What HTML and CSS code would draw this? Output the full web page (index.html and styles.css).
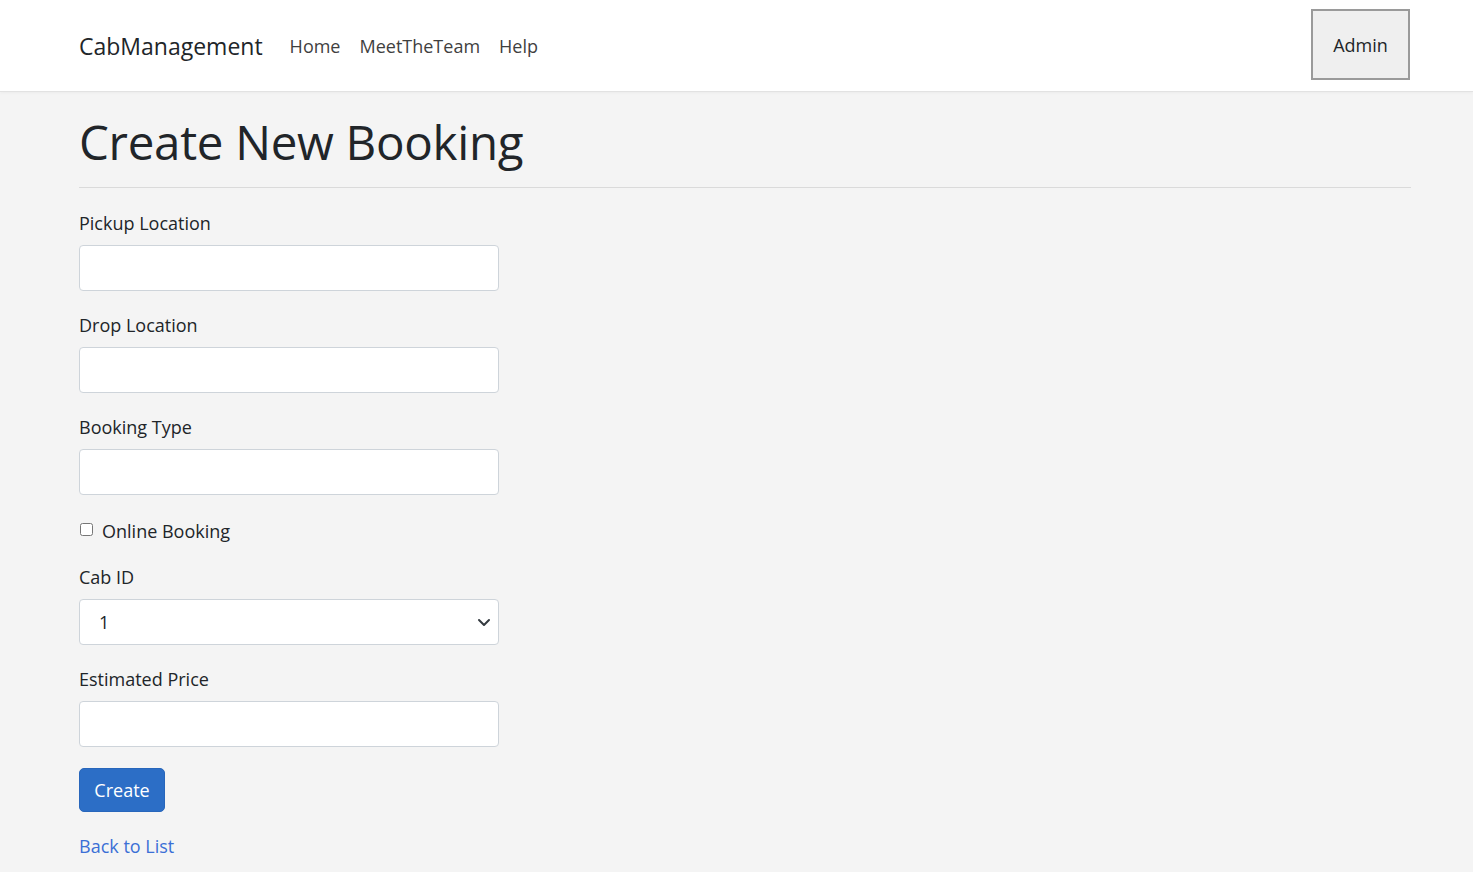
FILE: index.html
```html
<!DOCTYPE html>
<html lang="en">
<head>
<meta charset="utf-8">
<title>Create - CabManagement</title>
<link rel="stylesheet" href="styles.css">
</head>
<body>
<header class="navbar">
  <div class="nav-inner">
    <a class="brand" href="#">CabManagement</a>
    <nav class="nav-links">
      <a href="#">Home</a>
      <a href="#">MeetTheTeam</a>
      <a href="#">Help</a>
    </nav>
    <button class="admin-btn" type="button">Admin</button>
  </div>
</header>
<main class="container">
  <h1 class="title">Create New Booking</h1>
  <hr class="rule">
  <form class="form">
    <div class="group">
      <label class="label" for="pickup">Pickup Location</label>
      <input class="control" id="pickup" type="text">
    </div>
    <div class="group">
      <label class="label" for="drop">Drop Location</label>
      <input class="control" id="drop" type="text">
    </div>
    <div class="group">
      <label class="label" for="btype">Booking Type</label>
      <input class="control" id="btype" type="text">
    </div>
    <div class="check-row">
      <input class="check" id="online" type="checkbox">
      <label class="check-label" for="online">Online Booking</label>
    </div>
    <div class="group">
      <label class="label" for="cab">Cab ID</label>
      <div class="select-wrap">
        <select class="control select" id="cab"><option>1</option></select>
        <svg class="chev" width="14" height="10" viewBox="0 0 14 10"><path d="M2 3l5 5 5-5" fill="none" stroke="#343a40" stroke-width="2" stroke-linecap="round" stroke-linejoin="round"/></svg>
      </div>
    </div>
    <div class="group">
      <label class="label" for="price">Estimated Price</label>
      <input class="control" id="price" type="text">
    </div>
    <div class="actions">
      <button class="create-btn" type="button">Create</button>
    </div>
  </form>
  <a class="back" href="#">Back to List</a>
</main>
</body>
</html>
```
FILE: styles.css
```css
html, body {
  margin: 0;
  padding: 0;
}
body {
  background: #f4f4f4;
  font-family: "Open Sans", "Noto Sans", sans-serif;
  color: #212529;
  font-size: 18px;
}
a { text-decoration: none; }

.navbar {
  background: #fff;
  height: 91px;
  border-bottom: 1px solid #e2e2e2;
  box-shadow: 0 1px 3px rgba(0,0,0,0.04);
}
.nav-inner {
  box-sizing: border-box;
  height: 100%;
  padding: 0 63px 0 79px;
  display: flex;
  align-items: center;
}
.brand {
  color: #212529;
  font-size: 23px;
  margin-right: 27px;
}
.nav-links {
  display: flex;
  gap: 19px;
  flex: 1;
}
.nav-links a {
  color: #3f3f3f;
  font-size: 18px;
}
.admin-btn {
  width: 99px;
  height: 71px;
  margin-top: -2px;
  background: #efefef;
  border: 2px solid #9a9a9a;
  font-family: inherit;
  font-size: 18px;
  color: #212529;
  padding: 0;
}

.container {
  padding: 20px 62px 0 79px;
}
.title {
  margin: 0;
  font-size: 47.5px;
  font-weight: 500;
  line-height: 1.25;
  letter-spacing: -0.3px;
}
.rule {
  margin: 16px 0 22px;
  border: 0;
  border-top: 1px solid #dadada;
}
.form {
  display: flex;
  flex-direction: column;
  width: 420px;
}
.group {
  display: flex;
  flex-direction: column;
  margin-bottom: 21px;
}
.label {
  font-size: 18px;
  line-height: 27px;
  margin-bottom: 8px;
}
.control {
  box-sizing: border-box;
  height: 46px;
  width: 420px;
  border: 1px solid #ced4da;
  border-radius: 4px;
  background: #fff;
  font-family: inherit;
  font-size: 18px;
  padding: 0 19px;
  color: #212529;
}
.select-wrap {
  position: relative;
}
.select {
  appearance: none;
  -webkit-appearance: none;
}
.chev {
  position: absolute;
  right: 8px;
  top: 18px;
  pointer-events: none;
}
.check-row {
  display: flex;
  align-items: center;
  margin-top: 1px;
  margin-bottom: 19px;
  height: 28px;
}
.check {
  margin: 0 9px 4px 1px;
  width: 13px;
  height: 13px;
}
.check-label {
  font-size: 18px;
}
.create-btn {
  height: 44px;
  width: 86px;
  background: #2c6ec6;
  border: 1px solid #2866bb;
  border-radius: 5px;
  color: #fff;
  font-family: inherit;
  font-size: 18px;
  padding: 0;
}
.back {
  display: inline-block;
  margin-top: 21px;
  color: #3b6fd6;
  font-size: 18px;
  line-height: 27px;
}
```
